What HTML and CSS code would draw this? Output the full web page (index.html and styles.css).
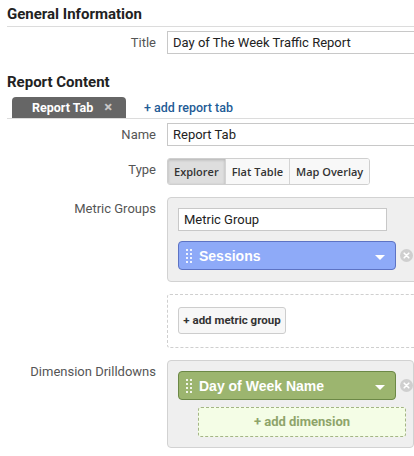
FILE: index.html
```html
<!DOCTYPE html>
<html>
    <head>
        <meta charset="utf-8">
        <link rel="stylesheet" href="styles.css">
    </head>
    <body>
        <h2 class='section_title underlined'>General Information</h2>
        <div class='form_row'>
            <div class='field_label'>Title</div>
            <input class='text_field wide_field' type='text' value='Day of The Week Traffic Report'>
        </div>

        <h2 class='section_title content_title'>Report Content</h2>
        <div class='tab_bar'>
            <div class='tab_active'>Report Tab<span class='tab_close'>&times;</span></div>
            <a class='add_tab'>+ add report tab</a>
        </div>

        <div class='form_row name_row'>
            <div class='field_label'>Name</div>
            <input class='text_field wide_field' type='text' value='Report Tab'>
        </div>
        <div class='form_row spaced_row'>
            <div class='field_label'>Type</div>
            <div class='button_group'>
                <div class='group_button pressed'>Explorer</div>
                <div class='group_button'>Flat Table</div>
                <div class='group_button'>Map Overlay</div>
            </div>
        </div>

        <div class='form_row spaced_row'>
            <div class='field_label'>Metric Groups</div>
            <div class='field_column'>
                <div class='gray_box'>
                    <input class='text_field group_name' type='text' value='Metric Group'>
                    <div class='pill_row'>
                        <div class='pill pill_blue'>
                            <span class='drag_dots'><i></i><i></i><i></i><i></i><i></i><i></i><i></i><i></i></span>
                            <span class='pill_text'>Sessions</span>
                            <span class='caret'></span>
                        </div>
                        <span class='remove_icon'>
                            <svg width="13" height="13" viewBox="0 0 13 13"><circle cx="6.5" cy="6.5" r="6.5" fill="#cfcfcf"/><path d="M4.2 4.2 L8.8 8.8 M8.8 4.2 L4.2 8.8" stroke="#fff" stroke-width="1.6" stroke-linecap="round"/></svg>
                        </span>
                    </div>
                </div>
                <div class='dashed_box'>
                    <div class='plain_button'>+ add metric group</div>
                </div>
            </div>
        </div>

        <div class='form_row spaced_row'>
            <div class='field_label'>Dimension Drilldowns</div>
            <div class='gray_box dim_box'>
                <div class='pill_row'>
                    <div class='pill pill_green'>
                        <span class='drag_dots'><i></i><i></i><i></i><i></i><i></i><i></i><i></i><i></i></span>
                        <span class='pill_text'>Day of Week Name</span>
                        <span class='caret'></span>
                    </div>
                    <span class='remove_icon'>
                        <svg width="13" height="13" viewBox="0 0 13 13"><circle cx="6.5" cy="6.5" r="6.5" fill="#cfcfcf"/><path d="M4.2 4.2 L8.8 8.8 M8.8 4.2 L4.2 8.8" stroke="#fff" stroke-width="1.6" stroke-linecap="round"/></svg>
                    </span>
                </div>
                <div class='add_dimension'>+ add dimension</div>
            </div>
        </div>
    </body>
</html>
```

FILE: styles.css
```css
html, body
{
    overflow: hidden;
}
body
{
    margin: 0;
    padding: 0 0 0 7px;
    background-color: #fff;
    font-family: Roboto, "Liberation Sans", sans-serif;
    font-size: 13px;
    color: #222;
}
.section_title
{
    margin: 0;
    font-size: 15px;
    font-weight: bold;
    line-height: 18px;
    color: #222;
}
.underlined
{
    padding-top: 5px;
    border-bottom: 1px solid #dcdcdc;
    box-sizing: border-box;
    height: 27px;
}
.content_title
{
    margin-top: 19px;
}
.form_row
{
    display: flex;
    align-items: flex-start;
    margin-top: 4px;
}
.name_row
{
    margin-top: 4px;
}
.spaced_row
{
    margin-top: 12px;
}
.field_label
{
    width: 149px;
    margin-right: 11px;
    flex-shrink: 0;
    text-align: right;
    color: #555;
    font-size: 13px;
    line-height: 16px;
    padding-top: 4px;
}
.text_field
{
    box-sizing: border-box;
    height: 23px;
    border: 1px solid #c8c8c8;
    padding: 0 5px;
    font-family: Roboto, "Liberation Sans", sans-serif;
    font-size: 13px;
    color: #222;
    background: #fff;
    outline: none;
}
.wide_field
{
    width: 260px;
    flex-shrink: 0;
}

/*tabs*/
.tab_bar
{
    display: flex;
    align-items: flex-end;
    margin-top: 6px;
    padding-left: 5px;
    border-bottom: 1px solid #dcdcdc;
    height: 21px;
}
.tab_active
{
    width: 114px;
    height: 21px;
    box-sizing: border-box;
    padding-left: 20px;
    background-color: #666;
    border-radius: 4px 4px 0 0;
    color: #fff;
    font-weight: bold;
    font-size: 12.5px;
    line-height: 21px;
}
.tab_close
{
    margin-left: 11px;
    color: #c8c8c8;
    font-size: 15px;
}
.add_tab
{
    margin-left: 18px;
    color: #1f5c96;
    font-weight: 500;
    font-size: 12.5px;
    line-height: 21px;
}

/*type buttons*/
.button_group
{
    display: flex;
    height: 27px;
    border: 1px solid #cfcfcf;
    border-radius: 3px;
    box-sizing: border-box;
    overflow: hidden;
}
.group_button
{
    padding: 0 6px;
    line-height: 25px;
    font-family: "Open Sans", sans-serif;
    font-weight: 600;
    font-size: 11px;
    color: #333;
    background-color: #f8f8f8;
    border-left: 1px solid #d4d4d4;
}
.group_button:first-child
{
    border-left: none;
}
.pressed
{
    background-color: #dedede;
    box-shadow: inset 0 1px 3px rgba(0,0,0,0.2);
}

/*metric groups*/
.field_column
{
    display: flex;
    flex-direction: column;
}
.gray_box
{
    width: 260px;
    box-sizing: border-box;
    padding: 10px 0 11px 10px;
    background-color: #efefef;
    border: 1px solid #d2d2d2;
    border-radius: 4px;
}
.group_name
{
    display: block;
    width: 209px;
}
.pill_row
{
    display: flex;
    align-items: center;
    margin-top: 10px;
}
.dim_box .pill_row
{
    margin-top: 0;
}
.pill
{
    position: relative;
    width: 218px;
    height: 29px;
    box-sizing: border-box;
    border-radius: 4px;
    display: flex;
    align-items: center;
    color: #fff;
    font-family: "Liberation Sans", Arial, sans-serif;
    font-weight: bold;
    font-size: 14px;
}
.pill_blue
{
    background-color: #8eaaf8;
    border: 1px solid #5d73c4;
}
.pill_green
{
    background-color: #9cb56f;
    border: 1px solid #6c8846;
}
.drag_dots
{
    display: grid;
    grid-template-columns: 2px 2px;
    grid-gap: 2px 2px;
    margin-left: 7px;
    width: 6px;
}
.drag_dots i
{
    display: block;
    width: 2px;
    height: 2px;
    background-color: rgba(255,255,255,0.85);
}
.pill_text
{
    margin-left: 7px;
}
.caret
{
    position: absolute;
    right: 10px;
    top: 13px;
    width: 0;
    height: 0;
    border-left: 5px solid transparent;
    border-right: 5px solid transparent;
    border-top: 5px solid #fff;
}
.remove_icon
{
    margin-left: 4px;
    height: 13px;
}
.dashed_box
{
    width: 260px;
    box-sizing: border-box;
    margin-top: 12px;
    padding: 12px 0 13px 10px;
    border: 1px dashed #cfcfcf;
    border-radius: 3px;
}
.plain_button
{
    display: inline-block;
    box-sizing: border-box;
    width: 108px;
    height: 27px;
    line-height: 25px;
    text-align: center;
    border: 1px solid #cdcdcd;
    border-radius: 3px;
    background-color: #f7f7f7;
    font-weight: bold;
    font-size: 11.5px;
    color: #333;
}

/*dimensions*/
.dim_box
{
    padding-bottom: 10px;
}
.add_dimension
{
    box-sizing: border-box;
    width: 208px;
    height: 30px;
    margin: 7px 0 0 20px;
    line-height: 28px;
    text-align: center;
    background-color: #f4fde6;
    border: 1px dashed #a4b585;
    border-radius: 3px;
    color: #8ea46a;
    font-weight: bold;
    font-size: 13px;
}
```
